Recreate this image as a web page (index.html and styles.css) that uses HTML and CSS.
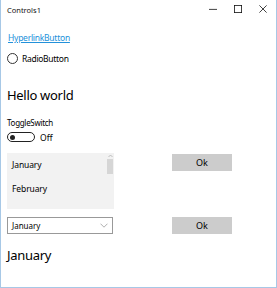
FILE: index.html
```html
<!DOCTYPE html>
<html>
<head>
<meta charset="utf-8">
<link rel="stylesheet" href="styles.css">
</head>
<body>
<div class="window">
  <div class="titlebar">
    <span class="title">Controls1</span>
    <div class="caption-buttons">
      <svg class="cap" width="10" height="10" viewBox="0 0 10 10"><path d="M0 5.5h10" stroke="#111" stroke-width="1"/></svg>
      <svg class="cap" width="10" height="10" viewBox="0 0 10 10"><rect x="0.5" y="0.5" width="9" height="9" fill="none" stroke="#111" stroke-width="1"/></svg>
      <svg class="cap" width="10" height="10" viewBox="0 0 10 10"><path d="M0.5 0.5L9.5 9.5M9.5 0.5L0.5 9.5" stroke="#111" stroke-width="1"/></svg>
    </div>
  </div>
  <div class="content">
    <a class="hyperlink">HyperlinkButton</a>
    <div class="radio"><span class="radio-circle"></span><span>RadioButton</span></div>
    <div class="hello">Hello world</div>
    <div class="toggle-label">ToggleSwitch</div>
    <div class="toggle"><span class="toggle-track"><span class="toggle-knob"></span></span><span class="toggle-text">Off</span></div>
    <div class="row row-list">
      <div class="listbox">
        <div class="items">
          <div class="item">January</div>
          <div class="item">February</div>
        </div>
        <div class="scrollbar">
          <svg class="arrow" width="5" height="4" viewBox="0 0 5 4"><path d="M0.5 3L2.5 1L4.5 3" fill="none" stroke="#b0b0b0" stroke-width="0.8"/></svg>
          <div class="thumb"></div>
        </div>
      </div>
      <div class="btn">Ok</div>
    </div>
    <div class="row row-combo">
      <div class="combo">
        <span>January</span>
        <svg width="8" height="5" viewBox="0 0 8 5"><path d="M0.5 0.7L4 4.2L7.5 0.7" fill="none" stroke="#9a9a9a" stroke-width="0.8"/></svg>
      </div>
      <div class="btn">Ok</div>
    </div>
    <div class="big">January</div>
  </div>
</div>
</body>
</html>
```
FILE: styles.css
```css
html, body {
  margin: 0;
  padding: 0;
  background: #fff;
}
body {
  font-family: "Noto Sans", "Open Sans", sans-serif;
  color: #000;
}
.window {
  width: 277px;
  height: 288px;
  box-sizing: border-box;
  border-left: 1px solid #a7c8e6;
  border-right: 1px solid #a7c8e6;
  border-bottom: 1px solid #a7c8e6;
  background: #fff;
}
.titlebar {
  height: 20px;
  display: flex;
  align-items: center;
  justify-content: space-between;
}
.title {
  font-size: 7.5px;
  padding-left: 6px;
  color: #111;
  margin-top: -1px;
}
.caption-buttons {
  display: flex;
  margin-top: -3px;
}
.cap {
  width: 8px;
  height: 8px;
  margin: 0 8.5px;
}
.cap:last-child {
  margin-right: 9px;
}
.content {
  padding-left: 6px;
  padding-top: 11px;
}
.hyperlink {
  display: block;
  font-size: 8.5px;
  letter-spacing: -0.25px;
  color: #2391da;
  text-decoration: underline;
  line-height: 14px;
  margin-left: 1px;
}
.radio {
  display: flex;
  align-items: center;
  gap: 4px;
  font-size: 8.5px;
  letter-spacing: -0.3px;
  margin-top: 5px;
  height: 16px;
}
.radio-circle {
  width: 9px;
  height: 9px;
  border: 1.3px solid #333;
  border-radius: 50%;
  display: inline-block;
}
.hello {
  font-size: 13px;
  letter-spacing: -0.3px;
  margin-top: 19px;
  line-height: 20px;
}
.toggle-label {
  font-size: 8px;
  letter-spacing: -0.3px;
  margin-top: 12px;
  line-height: 12px;
}
.toggle {
  display: flex;
  align-items: center;
  margin-top: 2px;
  height: 12px;
}
.toggle-track {
  width: 24px;
  height: 8px;
  border: 1.3px solid #222;
  border-radius: 6px;
  display: flex;
  align-items: center;
  padding-left: 2px;
  box-sizing: content-box;
}
.toggle-knob {
  width: 5px;
  height: 5px;
  background: #222;
  border-radius: 50%;
}
.toggle-text {
  font-size: 8.5px;
  margin-left: 5px;
}
.row {
  display: flex;
  align-items: flex-start;
}
.row-list {
  margin-top: 10px;
}
.listbox {
  width: 107px;
  height: 56px;
  background: #f2f2f2;
  display: flex;
}
.items {
  flex: 1;
  padding-top: 5px;
}
.item {
  font-size: 8.5px;
  letter-spacing: -0.1px;
  padding-left: 5px;
  height: 24px;
  line-height: 14px;
}
.scrollbar {
  width: 6px;
  margin-right: 1px;
  display: flex;
  flex-direction: column;
  align-items: center;
}
.arrow {
  margin-top: 1px;
}
.thumb {
  width: 6px;
  height: 15px;
  background: #d6d6d6;
  margin-top: 1px;
}
.btn {
  width: 60px;
  height: 17px;
  background: #cccccc;
  font-size: 9px;
  display: flex;
  align-items: center;
  justify-content: center;
  margin-left: 58px;
  margin-top: 1px;
}
.row-combo {
  margin-top: 8px;
}
.combo {
  width: 106px;
  height: 17px;
  box-sizing: border-box;
  border: 1px solid #999;
  display: flex;
  align-items: center;
  justify-content: space-between;
  padding: 0 4px 0 4px;
  font-size: 8px;
}
.row-combo .btn {
  margin-left: 59px;
  margin-top: 0;
}
.big {
  font-size: 13px;
  letter-spacing: -0.3px;
  margin-top: 12px;
  line-height: 18px;
}
```
